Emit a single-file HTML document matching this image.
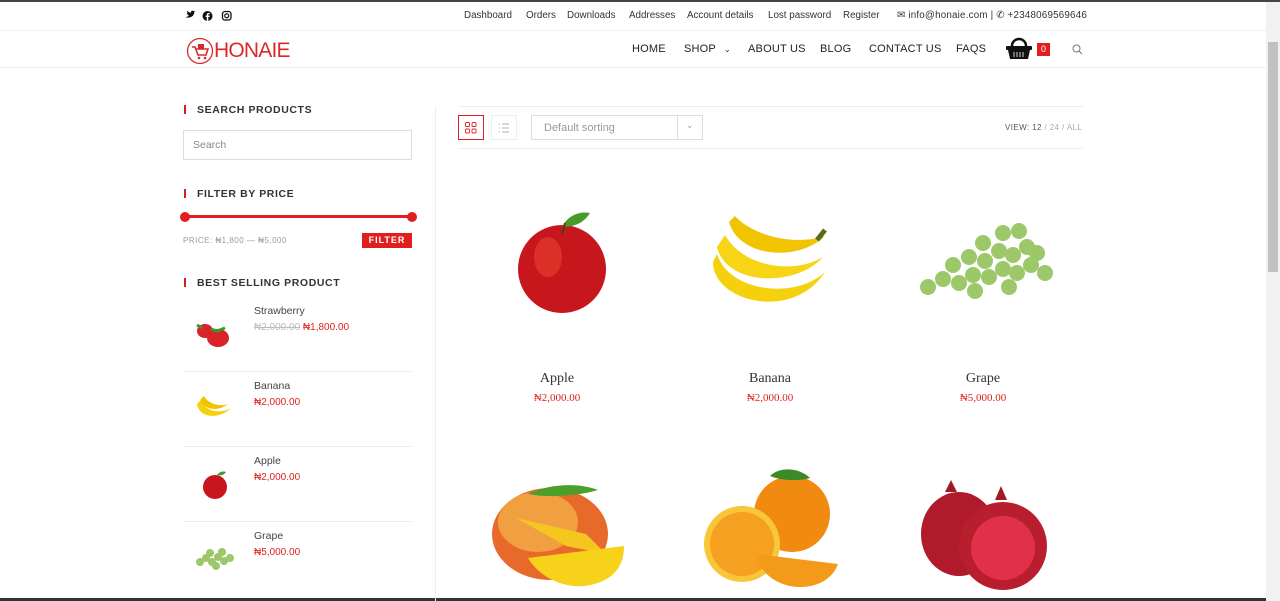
<!DOCTYPE html>
<html><head><meta charset="utf-8"><style>
*{margin:0;padding:0;box-sizing:border-box}
body{width:1280px;height:599px;overflow:hidden;background:#fff;font-family:"Liberation Sans",sans-serif;color:#333;position:relative;border-top:2px solid #444}
.a{position:absolute}
.top{font-size:9.8px;color:#333;top:8px}
.nav{font-size:11px;color:#222;top:41px;letter-spacing:.2px}
.h{font-size:10.5px;font-weight:bold;letter-spacing:.6px;color:#333}
.h:before{content:"";position:absolute;left:-13px;top:1px;width:2px;height:9px;background:#d01f25}
.pn{font-family:"Liberation Serif",serif;font-size:14px;color:#333;text-align:center;width:200px}
.pp{font-family:"Liberation Serif",serif;font-size:11px;color:#e0201f;text-align:center;width:200px}
.sn{font-size:10.5px;color:#444}
.sp{font-size:10px;color:#e0201f}
</style></head><body>
<svg class="a" style="left:183px;top:8px" width="60" height="12" viewBox="0 0 60 12">
<path d="M1 9c3 1 6 0 7-2-1 0-2 0-3-1 1 0 1 0 2-.5-1 0-2-1-2-2 .5 0 1 .3 1.5.3C5.5 3 5 2 5.5 1c1.5 1.5 3 2.5 5 2.5C10.5 1 13 0 14.5 1.5l1.5-.5-1 1.2 1-.3-1 1C15 8 10 11 5 10z" fill="#111" transform="scale(.75)"/>
<circle cx="24.5" cy="6" r="5" fill="#111"/><path d="M25.3 11V7h1.3l.2-1.4h-1.5v-.8c0-.4.1-.7.7-.7h.8V3c-.3 0-.7-.1-1.2-.1-1.1 0-1.8.6-1.8 1.8v.9h-1.2V7h1.2v4z" fill="#fff"/>
<rect x="39.5" y="1.5" width="8.5" height="8.5" rx="2.5" fill="none" stroke="#111" stroke-width="1.3"/><circle cx="43.75" cy="5.75" r="2" fill="none" stroke="#111" stroke-width="1.2"/>
</svg>
<div class="a top" style="left:464px">Dashboard</div>
<div class="a top" style="left:526px">Orders</div>
<div class="a top" style="left:567px">Downloads</div>
<div class="a top" style="left:629px">Addresses</div>
<div class="a top" style="left:687px">Account details</div>
<div class="a top" style="left:768px">Lost password</div>
<div class="a top" style="left:843px">Register</div>
<div class="a top" style="left:897px;letter-spacing:.2px">✉ info@honaie.com | ✆ +2348069569646</div>
<div class="a" style="left:0;top:28px;width:1266px;border-top:1px solid #f0f0f0"></div>
<svg class="a" style="left:186px;top:35px" width="28" height="28" viewBox="0 0 28 28"><circle cx="14" cy="14" r="12.5" fill="none" stroke="#d92a2a" stroke-width="1.3"/><path d="M6 10h3l3 8h8l2-6H10" fill="none" stroke="#d92a2a" stroke-width="1.6"/><rect x="12" y="7" width="6" height="5" fill="#d92a2a"/><circle cx="13" cy="21" r="1.3" fill="#d92a2a"/><circle cx="19" cy="21" r="1.3" fill="#d92a2a"/></svg>
<div class="a" style="left:214px;top:37px;font-size:21px;color:#d92a2a;letter-spacing:-.8px">HONAIE</div>
<div class="a nav" style="left:632px">HOME</div>
<div class="a nav" style="left:684px">SHOP <span style="font-size:8px;margin-left:5px">⌄</span></div>
<div class="a nav" style="left:748px">ABOUT US</div>
<div class="a nav" style="left:820px">BLOG</div>
<div class="a nav" style="left:869px">CONTACT US</div>
<div class="a nav" style="left:956px">FAQS</div>
<svg class="a" style="left:1005px;top:35px" width="28" height="24" viewBox="0 0 28 24"><path d="M7 9a7 7 0 0 1 14 0" fill="none" stroke="#111" stroke-width="2.5"/><rect x="1" y="9" width="26" height="4" rx="1" fill="#111"/><path d="M3 13h22l-2 9H5z" fill="#111"/><path d="M9 15v5M12 15v5M15 15v5M18 15v5" stroke="#fff" stroke-width=".8"/></svg>
<div class="a" style="left:1037px;top:41px;width:13px;height:13px;background:#e0201f;color:#fff;font-size:9px;text-align:center;line-height:13px">0</div>
<svg class="a" style="left:1072px;top:42px" width="11" height="11" viewBox="0 0 11 11"><circle cx="4.5" cy="4.5" r="3.5" fill="none" stroke="#777" stroke-width="1"/><path d="M7 7l3 3" stroke="#777"/></svg>
<div class="a" style="left:0;top:65px;width:1266px;border-top:1px solid #eee"></div>
<div class="a" style="left:1266px;top:0;width:14px;height:599px;background:#f1f1f1"></div>
<div class="a" style="left:1268px;top:40px;width:10px;height:230px;background:#c1c1c1"></div>
<div class="a" style="left:0;top:596px;width:1266px;height:3px;background:#333"></div>
<div class="a h" style="left:197px;top:102px">SEARCH PRODUCTS</div>
<div class="a" style="left:183px;top:128px;width:229px;height:30px;border:1px solid #ddd;font-size:10.5px;color:#888;padding:8px 9px">Search</div>
<div class="a h" style="left:197px;top:186px">FILTER BY PRICE</div>
<div class="a" style="left:185px;top:213px;width:227px;height:3px;background:#e0201f"></div>
<div class="a" style="left:180px;top:210px;width:10px;height:10px;border-radius:50%;background:#e0201f"></div>
<div class="a" style="left:407px;top:210px;width:10px;height:10px;border-radius:50%;background:#e0201f"></div>
<div class="a" style="left:183px;top:234px;font-size:8px;color:#999;letter-spacing:.5px">PRICE: ₦1,800 — ₦5,000</div>
<div class="a" style="left:362px;top:231px;width:50px;height:15px;background:#e0201f;color:#fff;font-size:9px;font-weight:bold;text-align:center;line-height:15px;letter-spacing:1px">FILTER</div>
<div class="a h" style="left:197px;top:275px">BEST SELLING PRODUCT</div>
<div class="a sn" style="left:254px;top:303px">Strawberry</div>
<div class="a sp" style="left:254px;top:320px"><s style="color:#bbb">₦2,000.00</s> ₦1,800.00</div>
<svg class="a" style="left:193px;top:315px" width="42" height="34"><ellipse cx="12" cy="14" rx="8" ry="7" fill="#d9222a"/><ellipse cx="25" cy="21" rx="11" ry="9" fill="#d9222a"/><path d="M4 8l5 3M18 12l6 2 8-3" stroke="#3a9a2a" stroke-width="3" fill="none"/></svg>
<div class="a" style="left:183px;top:369px;width:229px;border-top:1px solid #eee"></div>
<div class="a sn" style="left:254px;top:378px">Banana</div>
<div class="a sp" style="left:254px;top:395px">₦2,000.00</div>
<svg class="a" style="left:194px;top:392px" width="40" height="32"><path d="M3 10c2 14 22 16 34 4-10 6-26 4-30-8z" fill="#f5d10d"/><path d="M6 6c4 10 18 12 28 4-8 3-20 0-24-8z" fill="#f0c400"/></svg>
<div class="a" style="left:183px;top:444px;width:229px;border-top:1px solid #eee"></div>
<div class="a sn" style="left:254px;top:453px">Apple</div>
<div class="a sp" style="left:254px;top:470px">₦2,000.00</div>
<svg class="a" style="left:201px;top:465px" width="30" height="34"><circle cx="14" cy="20" r="12" fill="#c8161d"/><path d="M16 8c3-4 7-4 9-3-2 3-5 4-9 3z" fill="#4a9a2a"/></svg>
<div class="a" style="left:183px;top:519px;width:229px;border-top:1px solid #eee"></div>
<div class="a sn" style="left:254px;top:528px">Grape</div>
<div class="a sp" style="left:254px;top:545px">₦5,000.00</div>
<svg class="a" style="left:192px;top:542px" width="44" height="28"><g fill="#9cc86a"><circle cx="8" cy="18" r="4"/><circle cx="14" cy="14" r="4"/><circle cx="20" cy="18" r="4"/><circle cx="26" cy="13" r="4"/><circle cx="32" cy="17" r="4"/><circle cx="38" cy="14" r="4"/><circle cx="18" cy="9" r="4"/><circle cx="30" cy="8" r="4"/><circle cx="24" cy="22" r="4"/></g></svg>
<div class="a" style="left:435px;top:104px;height:495px;border-left:1px solid #eee"></div>
<div class="a" style="left:458px;top:104px;width:625px;border-top:1px solid #eee"></div>
<div class="a" style="left:458px;top:146px;width:625px;border-top:1px solid #eee"></div>
<div class="a" style="left:458px;top:113px;width:26px;height:25px;border:1px solid #e0201f"></div>
<svg class="a" style="left:465px;top:120px" width="12" height="12"><g fill="none" stroke="#e0201f" stroke-width=".9"><rect x=".5" y=".5" width="4" height="4" rx="1"/><rect x="7" y=".5" width="4" height="4" rx="1"/><rect x=".5" y="7" width="4" height="4" rx="1"/><rect x="7" y="7" width="4" height="4" rx="1"/></g></svg>
<div class="a" style="left:491px;top:113px;width:26px;height:25px;border:1px solid #eee"></div>
<svg class="a" style="left:498px;top:120px" width="12" height="12"><g stroke="#999" stroke-width=".8"><path d="M1 2h1M4 2h7M1 6h1M4 6h7M1 10h1M4 10h7"/></g></svg>
<div class="a" style="left:531px;top:113px;width:172px;height:25px;border:1px solid #ddd;font-size:11px;color:#999;padding:6px 12px">Default sorting</div>
<div class="a" style="left:677px;top:113px;height:25px;border-left:1px solid #ddd"></div>
<div class="a" style="left:686px;top:118px;font-size:9px;color:#999">⌄</div>
<div class="a" style="left:1005px;top:121px;font-size:8px;color:#555;letter-spacing:.4px">VIEW: 12 <span style="color:#aaa">/ 24 / ALL</span></div>
<svg class="a" style="left:510px;top:203px" width="100" height="112"><circle cx="52" cy="64" r="44" fill="#c8161d"/><ellipse cx="38" cy="52" rx="14" ry="20" fill="#e23a2e" opacity=".7"/><path d="M52 22c6-12 18-16 28-14-6 10-16 14-28 14z" fill="#4a9a2a"/><path d="M52 30l3-12" stroke="#5a3a1a" stroke-width="2"/></svg>
<div class="a pn" style="left:457px;top:369px">Apple</div>
<div class="a pp" style="left:457px;top:390px">₦2,000.00</div>
<svg class="a" style="left:705px;top:210px" width="130" height="105"><path d="M8 50c0 40 80 60 112 10-30 28-96 20-108-18z" fill="#f5d10d"/><path d="M12 35c10 40 80 40 106 10-30 18-80 10-98-22z" fill="#f7d514"/><path d="M24 10c10 36 70 40 96 14-30 10-72 0-90-20z" fill="#f0c400"/><path d="M112 28l8-10" stroke="#5a6a1a" stroke-width="5"/></svg>
<div class="a pn" style="left:670px;top:369px">Banana</div>
<div class="a pp" style="left:670px;top:390px">₦2,000.00</div>
<svg class="a" style="left:913px;top:215px" width="145" height="90"><g fill="#9cc86a"><circle cx="15" cy="70" r="8"/><circle cx="30" cy="62" r="8"/><circle cx="46" cy="66" r="8"/><circle cx="60" cy="58" r="8"/><circle cx="76" cy="60" r="8"/><circle cx="90" cy="52" r="8"/><circle cx="104" cy="56" r="8"/><circle cx="118" cy="48" r="8"/><circle cx="132" cy="56" r="8"/><circle cx="40" cy="48" r="8"/><circle cx="56" cy="40" r="8"/><circle cx="72" cy="44" r="8"/><circle cx="86" cy="34" r="8"/><circle cx="100" cy="38" r="8"/><circle cx="114" cy="30" r="8"/><circle cx="70" cy="26" r="8"/><circle cx="90" cy="16" r="8"/><circle cx="106" cy="14" r="8"/><circle cx="124" cy="36" r="8"/><circle cx="62" cy="74" r="8"/><circle cx="96" cy="70" r="8"/></g></svg>
<div class="a pn" style="left:883px;top:369px">Grape</div>
<div class="a pp" style="left:883px;top:390px">₦5,000.00</div>
<svg class="a" style="left:488px;top:480px" width="140" height="112"><ellipse cx="62" cy="52" rx="58" ry="46" fill="#e86a2a"/><ellipse cx="50" cy="40" rx="40" ry="30" fill="#f0a040"/><path d="M28 36l50 28 40 8-20-20z" fill="#f5c520"/><path d="M40 76l96-12c0 20-10 36-40 40-20 2-44-8-56-28z" fill="#f7d21a"/><path d="M40 12c20-10 50-12 70-4-20 6-50 8-70 4z" fill="#4aa02a"/></svg>
<svg class="a" style="left:700px;top:462px" width="140" height="135"><circle cx="92" cy="50" r="38" fill="#f08a10"/><path d="M70 12c10-10 30-8 40 2-14 4-30 2-40-2z" fill="#3a8a2a"/><circle cx="42" cy="80" r="38" fill="#f8c63a"/><circle cx="42" cy="80" r="32" fill="#f5a020"/><path d="M56 90c8 40 70 44 82 10z" fill="#f39a1a"/></svg>
<svg class="a" style="left:913px;top:478px" width="140" height="115"><ellipse cx="46" cy="54" rx="38" ry="42" fill="#b01a2a"/><circle cx="90" cy="66" r="44" fill="#b81e2e"/><circle cx="90" cy="68" r="32" fill="#e0304a"/><path d="M82 20l6-14 6 14z" fill="#a01a26"/><path d="M32 12l6-12 6 12z" fill="#a01a26"/></svg>
</body></html>
